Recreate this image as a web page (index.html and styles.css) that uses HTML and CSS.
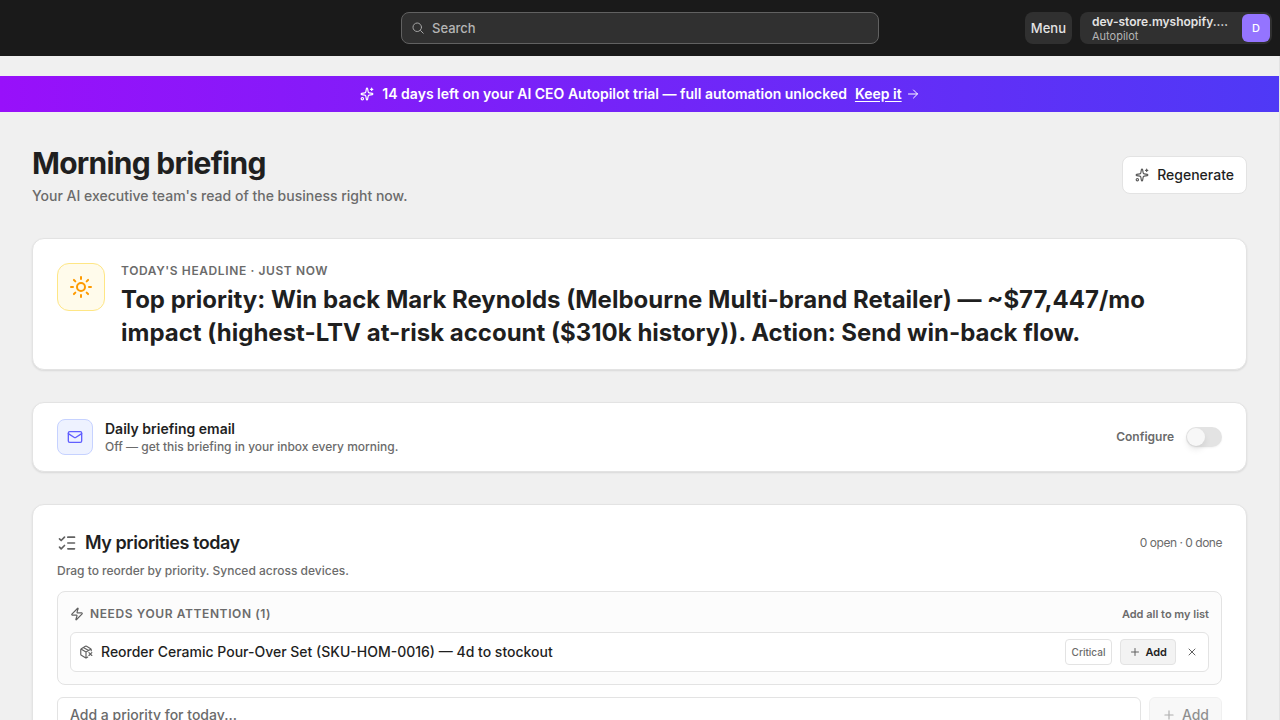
FILE: index.html
```html
<!DOCTYPE html>
<html lang="en">
<head>
<meta charset="utf-8">
<meta name="viewport" content="width=device-width, initial-scale=1">
<title>Morning briefing</title>
<link rel="stylesheet" href="styles.css">
</head>
<body>
<svg class="sprite" aria-hidden="true">
  <symbol id="sparkles" viewBox="0 0 24 24"><path d="M11.017 2.814a1 1 0 0 1 1.966 0l1.051 5.558a2 2 0 0 0 1.594 1.594l5.558 1.051a1 1 0 0 1 0 1.966l-5.558 1.051a2 2 0 0 0-1.594 1.594l-1.051 5.558a1 1 0 0 1-1.966 0l-1.051-5.558a2 2 0 0 0-1.594-1.594l-5.558-1.051a1 1 0 0 1 0-1.966l5.558-1.051a2 2 0 0 0 1.594-1.594z"/><path d="M20 2v4M22 4h-4"/><circle cx="4" cy="20" r="2"/></symbol>
  <symbol id="plus" viewBox="0 0 24 24"><path d="M5 12h14M12 5v14"/></symbol>
</svg>
<header class="topbar">
  <label class="search">
    <svg class="icon icon-12" viewBox="0 0 24 24"><circle cx="10.5" cy="10.5" r="8.5"/><path d="m17 17 5.500 5.500"/></svg>
    <input class="search-input" type="search" placeholder="Search" aria-label="Search">
  </label>
  <div class="topbar-actions">
    <button class="menu-button" type="button">Menu</button>
    <button class="account" type="button">
      <span class="account-text"><span class="account-name">dev-store.myshopify.com</span><span class="account-plan">Autopilot</span></span>
      <span class="avatar">D</span>
    </button>
  </div>
</header>
<main class="main">
  <div class="trial">
    <svg class="icon icon-14"><use href="#sparkles"/></svg>
    <span>14 days left on your AI CEO Autopilot trial — full automation unlocked</span>
    <a class="trial-link" href="#keep"><span class="trial-link-text">Keep it</span>
      <svg class="icon icon-12" viewBox="0 0 24 24"><path d="M3 12h18M13 4l8 8-8 8"/></svg></a>
  </div>
  <div class="content">
    <div class="page-head">
      <div>
        <h1 class="page-title">Morning briefing</h1>
        <p class="page-subtitle">Your AI executive team's read of the business right now.</p>
      </div>
      <button class="regenerate" type="button"><svg class="icon icon-14"><use href="#sparkles"/></svg>Regenerate</button>
    </div>
    <section class="card headline">
      <div class="tile tile-sun">
        <svg class="icon icon-24" viewBox="0 0 24 24"><circle cx="12" cy="12" r="4"/><path d="M12 2v2M12 20v2M4.93 4.93l1.41 1.41M17.66 17.66l1.41 1.41M2 12h2M20 12h2M6.34 17.66l-1.41 1.41M19.07 4.93l-1.41 1.41"/></svg>
      </div>
      <div>
        <p class="eyebrow">Today's headline · just now</p>
        <h2 class="headline-text">Top priority: Win back Mark Reynolds (Melbourne Multi-brand Retailer) — ~$77,447/mo impact (highest-LTV at-risk account ($310k history)). Action: Send win-back flow.</h2>
      </div>
    </section>
    <section class="card email">
      <div class="tile tile-mail">
        <svg class="icon icon-16" viewBox="0 0 24 24"><rect x="2" y="4" width="20" height="16" rx="2"/><path d="m22 7-8.991 5.727a2 2 0 0 1-2.009 0L2 7"/></svg>
      </div>
      <div class="grow">
        <h2 class="email-title" id="email-title">Daily briefing email</h2>
        <p class="email-text">Off — get this briefing in your inbox every morning.</p>
      </div>
      <button class="link-button configure" type="button">Configure</button>
      <input class="switch" type="checkbox" role="switch" aria-labelledby="email-title">
    </section>
    <section class="card priorities">
      <div class="row">
        <svg class="icon icon-20" viewBox="0 0 24 24"><path d="M13 5h8M13 12h8M13 19h8M3 17l2 2 4-4M3 7l2 2 4-4"/></svg>
        <h2 class="section-title grow">My priorities today</h2>
        <span class="count">0 open · 0 done</span>
      </div>
      <p class="section-text">Drag to reorder by priority. Synced across devices.</p>
      <div class="attention">
        <div class="row attention-head">
          <svg class="icon icon-14" viewBox="0 0 24 24"><path d="M4 14a1 1 0 0 1-.78-1.63l9.9-10.2a.5.5 0 0 1 .86.46l-1.92 6.02A1 1 0 0 0 13 10h7a1 1 0 0 1 .78 1.63l-9.9 10.2a.5.5 0 0 1-.86-.46l1.92-6.02A1 1 0 0 0 11 14z"/></svg>
          <h3 class="attention-title grow">Needs your attention (1)</h3>
          <button class="link-button add-all" type="button">Add all to my list</button>
        </div>
        <div class="row item">
          <svg class="icon icon-14" viewBox="0 0 24 24"><path d="M21 10V8a2 2 0 0 0-1-1.730l-7-4a2 2 0 0 0-2 0l-7 4A2 2 0 0 0 3 8v8a2 2 0 0 0 1 1.730l7 4a2 2 0 0 0 2 0l2-1.140M7.500 4.270l9 5.150M3.290 7 12 12l8.710-5M12 22V12M17 13l5 5M17 18l5-5"/></svg>
          <span class="item-title grow">Reorder Ceramic Pour-Over Set (SKU-HOM-0016) — 4d to stockout</span>
          <span class="badge">Critical</span>
          <button class="add-small" type="button"><svg class="icon icon-12"><use href="#plus"/></svg>Add</button>
          <button class="dismiss" type="button" aria-label="Dismiss"><svg class="icon icon-12" viewBox="0 0 24 24"><path d="M18 6 6 18M6 6l12 12"/></svg></button>
        </div>
      </div>
      <form class="row new-item">
        <input class="new-input grow" type="text" placeholder="Add a priority for today..." aria-label="Add a priority for today">
        <button class="new-button" type="submit" disabled><svg class="icon icon-14"><use href="#plus"/></svg>Add</button>
      </form>
    </section>
  </div>
</main>
</body>
</html>
```

FILE: styles.css
```css
* { box-sizing: border-box; }
html, body { margin: 0; height: 100%; }
body {
  display: flex;
  flex-direction: column;
  overflow: hidden;
  background: #f0f0f0;
  color: #1f1f1f;
  font-family: Inter, "Liberation Sans", sans-serif;
  font-size: 14px;
  line-height: 20px;
  font-weight: 500;
}
h1, h2, h3, p { margin: 0; }
button, input { font: inherit; color: inherit; }
button { cursor: pointer; }
.sprite { display: none; }
.icon {
  flex: none;
  display: block;
  fill: none;
  stroke: currentColor;
  stroke-width: 2;
  stroke-linecap: round;
  stroke-linejoin: round;
}
.icon-12 { width: 12px; height: 12px; }
.icon-14 { width: 14px; height: 14px; }
.icon-16 { width: 16px; height: 16px; }
.icon-20 { width: 20px; height: 20px; }
.icon-24 { width: 24px; height: 24px; }
.row { display: flex; align-items: center; gap: 8px; }
.grow { flex: 1; min-width: 0; }

.topbar {
  flex: none;
  display: grid;
  grid-template-columns: 1fr minmax(0, 478px) 1fr;
  align-items: center;
  height: 56px;
  padding: 0 8px;
  background: #1a1a1a;
  color: #e3e3e3;
}
.search {
  grid-column: 2;
  display: flex;
  align-items: center;
  gap: 8px;
  height: 32px;
  padding: 0 10px;
  border: 1px solid #616161;
  border-radius: 8px;
  background: #303030;
  color: #a6a6a6;
}
.search-input {
  flex: 1;
  min-width: 0;
  padding: 0;
  border: 0;
  outline: 0;
  background: none;
  font-size: 13px;
}
.search-input::placeholder { color: #b5b5b5; }
.topbar-actions { display: flex; justify-content: flex-end; gap: 8px; }
.menu-button {
  height: 32px;
  padding: 0 6px;
  border: 0;
  border-radius: 8px;
  background: #303030;
  font-size: 13px;
  font-weight: 550;
}
.account {
  display: flex;
  align-items: center;
  gap: 12px;
  width: 192px;
  height: 32px;
  padding: 0 2px 0 12px;
  border: 0;
  border-radius: 8px;
  background: #303030;
  text-align: left;
}
.account-text { flex: 1; min-width: 0; }
.account-name, .account-plan { display: block; overflow: hidden; text-overflow: ellipsis; white-space: nowrap; }
.account-name { font-size: 12px; line-height: 16px; font-weight: 600; }
.account-plan { font-size: 11px; line-height: 12px; font-weight: 400; color: #b5b5b5; }
.avatar {
  flex: none;
  width: 28px;
  height: 28px;
  border-radius: 6px;
  background: #9474ff;
  color: #fff;
  font-size: 11px;
  line-height: 28px;
  text-align: center;
}

.main {
  flex: 1;
  min-height: 0;
  overflow-y: auto;
  scrollbar-width: none;
  padding-top: 20px;
  border-right: 1px solid #e3e3e3;
}
.trial {
  display: flex;
  align-items: center;
  justify-content: center;
  gap: 8px;
  padding: 8px 16px;
  background: linear-gradient(90deg, #9810fa, #4f39f6);
  color: #fff;
  font-weight: 600;
}
.trial-link { display: flex; align-items: center; gap: 5px; color: inherit; text-decoration: none; }
.trial-link-text { text-decoration: underline; text-underline-offset: 2px; }

.content { display: flex; flex-direction: column; gap: 32px; padding: 32px; }
.page-head { display: flex; align-items: center; justify-content: space-between; gap: 16px; }
.page-title { font-size: 30px; line-height: 38px; font-weight: 700; letter-spacing: -0.025em; }
.page-subtitle { margin-top: 4px; color: #6b6b6b; }
.regenerate {
  display: flex;
  align-items: center;
  gap: 8px;
  height: 38px;
  padding: 0 12px;
  border: 1px solid #e3e3e3;
  border-radius: 8px;
  background: #fff;
}
.regenerate .icon { color: #5a5a5a; }
.card {
  border: 1px solid #e3e3e3;
  border-radius: 12px;
  background: #fff;
  box-shadow: 0 1px 2px rgba(0, 0, 0, 0.1);
}
.tile { flex: none; display: grid; place-items: center; border: 1px solid; }
.tile-sun { width: 48px; height: 48px; border-color: #fee685; border-radius: 12px; background: #fffbeb; }
.tile-sun .icon { color: #fe9a00; }
.tile-mail { width: 36px; height: 36px; border-color: #c6d2ff; border-radius: 8px; background: #eef2ff; }
.tile-mail .icon { color: #615fff; }

.headline { display: flex; gap: 16px; padding: 24px 24px 20px; }
.eyebrow {
  color: #6b6b6b;
  font-size: 12px;
  line-height: 16px;
  font-weight: 600;
  letter-spacing: 0.05em;
  text-transform: uppercase;
}
.headline-text { margin-top: 4px; font-size: 24px; line-height: 33px; font-weight: 700; }

.email { display: flex; align-items: center; gap: 12px; padding: 16px 24px; }
.email-title { font-size: 14px; line-height: 20px; font-weight: 600; }
.email-text { color: #6b6b6b; font-size: 12px; line-height: 16px; }
.link-button { padding: 0; border: 0; background: none; color: #6b6b6b; font-weight: 600; }
.configure { font-size: 12px; }
.switch {
  appearance: none;
  display: flex;
  align-items: center;
  width: 36px;
  height: 20px;
  margin: 0;
  padding: 1px;
  border-radius: 10px;
  background: #e3e3e3;
  box-shadow: 0 1px 2px rgba(0, 0, 0, 0.05);
}
.switch::before {
  content: "";
  width: 18px;
  height: 18px;
  border-radius: 50%;
  background: #f7f7f7;
  box-shadow: 0 4px 6px rgba(0, 0, 0, 0.08);
}
.switch:checked { justify-content: flex-end; background: #303030; }

.priorities { padding: 24px; color: #1f1f1f; }
.priorities .icon { color: #616161; }
.section-title { font-size: 18px; line-height: 28px; font-weight: 600; letter-spacing: -0.025em; }
.count { color: #6b6b6b; font-size: 12px; font-weight: 400; letter-spacing: -0.04em; }
.section-text { margin-top: 6px; color: #6b6b6b; font-size: 12px; line-height: 16px; }
.attention {
  margin-top: 12px;
  padding: 12px;
  border: 1px solid #e3e3e3;
  border-radius: 8px;
  background: #fcfcfc;
}
.attention-head { gap: 6px; }
.attention-title {
  color: #6b6b6b;
  font-size: 12px;
  line-height: 20px;
  font-weight: 600;
  letter-spacing: 0.05em;
  text-transform: uppercase;
}
.add-all { font-size: 11px; }
.item { margin-top: 8px; height: 40px; padding: 0 8px; border: 1px solid #e3e3e3; border-radius: 6px; background: #fff; }
.badge { padding: 4px 6px; border: 1px solid #e3e3e3; border-radius: 4px; color: #6b6b6b; font-size: 10px; line-height: 16px; }
.add-small {
  display: flex;
  align-items: center;
  gap: 4px;
  height: 26px;
  padding: 0 8px;
  border: 1px solid #e3e3e3;
  border-radius: 4px;
  background: #f3f3f3;
  font-size: 11px;
  font-weight: 600;
}
.dismiss { padding: 2px; border: 0; background: none; }
.new-item { margin-top: 12px; align-items: stretch; }
.new-input, .new-button { height: 36px; border: 1px solid #e3e3e3; border-radius: 6px; }
.new-input { padding: 0 12px 2px; background: #fff; }
.new-input::placeholder { color: #6b6b6b; }
.new-button { display: flex; align-items: center; gap: 6px; padding: 0 12px; background: #f3f3f3; opacity: 0.5; }
```
